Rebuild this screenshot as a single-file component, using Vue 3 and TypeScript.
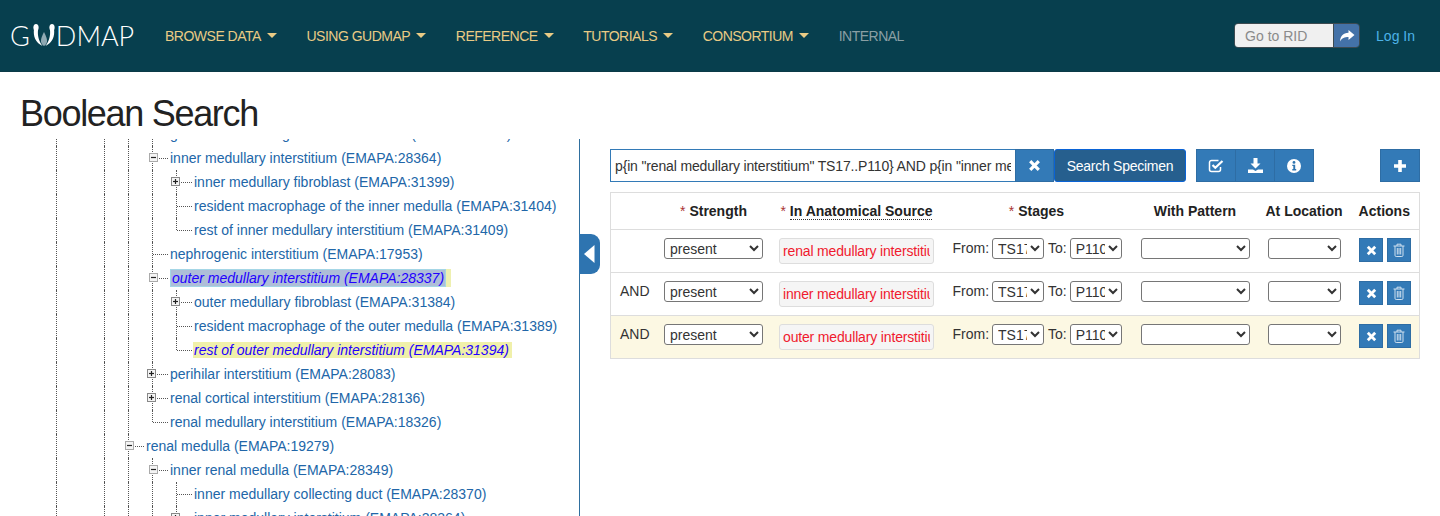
<script setup lang="ts">
interface TreeRow { text: string; col: number; exp?: 'minus' | 'plus'; last?: boolean; mark?: 'focus' | 'hit'; }
const rows: TreeRow[] = [
  { text: 'glomerular mesangial interstitial tissue (EMAPA:28339)', col: 4 },
  { text: 'inner medullary interstitium (EMAPA:28364)', col: 4, exp: 'minus' },
  { text: 'inner medullary fibroblast (EMAPA:31399)', col: 5, exp: 'plus' },
  { text: 'resident macrophage of the inner medulla (EMAPA:31404)', col: 5 },
  { text: 'rest of inner medullary interstitium (EMAPA:31409)', col: 5, last: true },
  { text: 'nephrogenic interstitium (EMAPA:17953)', col: 4 },
  { text: 'outer medullary interstitium (EMAPA:28337)', col: 4, exp: 'minus', mark: 'focus' },
  { text: 'outer medullary fibroblast (EMAPA:31384)', col: 5, exp: 'plus' },
  { text: 'resident macrophage of the outer medulla (EMAPA:31389)', col: 5 },
  { text: 'rest of outer medullary interstitium (EMAPA:31394)', col: 5, last: true, mark: 'hit' },
  { text: 'perihilar interstitium (EMAPA:28083)', col: 4, exp: 'plus' },
  { text: 'renal cortical interstitium (EMAPA:28136)', col: 4, exp: 'plus' },
  { text: 'renal medullary interstitium (EMAPA:18326)', col: 4, last: true },
  { text: 'renal medulla (EMAPA:19279)', col: 3, exp: 'minus' },
  { text: 'inner renal medulla (EMAPA:28349)', col: 4, exp: 'minus' },
  { text: 'inner medullary collecting duct (EMAPA:28370)', col: 5 },
  { text: 'inner medullary interstitium (EMAPA:28364)', col: 5, exp: 'plus' },
];
const guides = [true, false, true, true, true];
const nav = ['BROWSE DATA', 'USING GUDMAP', 'REFERENCE', 'TUTORIALS', 'CONSORTIUM'];
const terms = [
  { op: '', source: 'renal medullary interstitium', active: false },
  { op: 'AND', source: 'inner medullary interstitium', active: false },
  { op: 'AND', source: 'outer medullary interstitium', active: true },
];
const query = 'p{in "renal medullary interstitium" TS17..P110} AND p{in "inner medullary interstitium" TS17..P110} AND p{in "outer medullary interstitium" TS17..P110}';
</script>

<template>
  <div class="page">
    <header class="navbar">
      <div class="logo">
        <span>G</span>
        <svg class="logo-mark" width="28" height="24" viewBox="0 0 28 24">
          <path d="M14 9c-2 4-3.200 6.500-3 9.500.2 2 1.500 3.800 3 4.500 1.500-.7 2.800-2.500 3-4.500.2-3-1-5.500-3-9.500z" fill="#8fa9b3" />
          <path d="M4 6c-1 7.500 1.500 13.500 8.500 17C8.500 18 7.500 12 8 7z" fill="#fff" />
          <path d="M24 6c1 7.500-1.500 13.500-8.500 17 4-5 5-11 4.500-16z" fill="#fff" />
          <ellipse cx="6" cy="4.500" rx="2.600" ry="3.500" fill="#fff" />
          <ellipse cx="22" cy="4.500" rx="2.600" ry="3.500" fill="#fff" />
        </svg>
        <span>DMAP</span>
      </div>
      <nav class="menu">
        <a v-for="item in nav" :key="item" class="menu-item">{{ item }}<i class="caret"></i></a>
        <a class="menu-item muted">INTERNAL</a>
      </nav>
      <div class="nav-right">
        <div class="rid">
          <input class="rid-input" placeholder="Go to RID" />
          <button class="rid-go" aria-label="Go">
            <svg width="16" height="14" viewBox="0 0 16 14"><path d="M9.500 1l6 5-6 5V8C5.500 8 3 9 1 12.500 1.200 7.500 4 4 9.500 3.800z" fill="#fff" /></svg>
          </button>
        </div>
        <a class="login">Log In</a>
      </div>
    </header>

    <h1 class="title">Boolean Search</h1>

    <main class="body">
      <aside class="tree">
        <div class="tree-list">
          <div v-for="(r, i) in rows" :key="i" class="tree-row">
            <span v-for="n in r.col" :key="n" class="indent" :class="{ guide: guides[n - 1] }"></span>
            <span class="branch" :class="{ end: r.last }">
              <span v-if="r.exp" class="toggle" :class="{ 'toggle-plus': r.exp === 'plus' }">
                <svg width="7" height="7" viewBox="0 0 7 7">
                  <path d="M1 3.500h5" stroke="#222" stroke-width="1.200" />
                  <path v-if="r.exp === 'plus'" d="M3.500 1v5" stroke="#222" stroke-width="1.200" />
                </svg>
              </span>
            </span>
            <a class="node" :class="r.mark">
              <span v-if="r.mark === 'focus'" class="focus-inner">{{ r.text }}</span>
              <template v-else>{{ r.text }}</template>
            </a>
          </div>
        </div>
        <button class="collapse" aria-label="Collapse">
          <svg width="11" height="18" viewBox="0 0 11 18"><path d="M10.500 0v18L0 9z" fill="#fff" /></svg>
        </button>
      </aside>

      <section class="work">
        <div class="toolbar">
          <div class="search-group">
            <input class="query" :value="query" />
            <button class="btn clear" aria-label="Clear">
              <svg width="13" height="13" viewBox="0 0 13 13"><path d="M2.200 2.200l8.600 8.600M10.800 2.200l-8.600 8.600" stroke="#fff" stroke-width="3.200" /></svg>
            </button>
            <button class="btn run">Search Specimen</button>
          </div>
          <div class="tool-group">
            <button class="btn tool" aria-label="Validate">
              <svg width="16" height="14" viewBox="0 0 16 14" fill="none" stroke="#fff"><path d="M12.500 8v2.500a2 2 0 0 1-2 2h-7a2 2 0 0 1-2-2v-7a2 2 0 0 1 2-2h7" stroke-width="1.500" /><path d="M4.500 6l2.800 2.800L14.500 2" stroke-width="2.200" /></svg>
            </button>
            <button class="btn tool" aria-label="Download">
              <svg width="15" height="15" viewBox="0 0 15 15"><path d="M5.500 0h4v5.500h3L7.500 10.500 2.500 5.500h3zM0 11.500h5l2.500 1.500L10 11.500h5V15H0z" fill="#fff" /></svg>
            </button>
            <button class="btn tool" aria-label="Info">
              <svg width="14" height="14" viewBox="0 0 14 14"><circle cx="7" cy="7" r="7" fill="#fff" /><circle cx="7" cy="3.400" r="1.400" fill="#2f75b0" /><path d="M5.300 5.800h2.900v4.300h1v1.300H5.300v-1.300h1V7.100h-1z" fill="#2f75b0" /></svg>
            </button>
          </div>
          <button class="btn add" aria-label="Add">
            <svg width="14" height="14" viewBox="0 0 14 14"><path d="M7 1v12M1 7h12" stroke="#fff" stroke-width="3.600" /></svg>
          </button>
        </div>

        <table class="terms">
          <colgroup>
            <col class="c-op" /><col class="c-str" /><col class="c-src" /><col class="c-stg" /><col class="c-pat" /><col class="c-loc" /><col class="c-act" />
          </colgroup>
          <thead>
            <tr>
              <th></th>
              <th><span class="req">*</span> Strength</th>
              <th><span class="req">*</span> <span class="dotted">In Anatomical Source</span></th>
              <th><span class="req">*</span> Stages</th>
              <th>With Pattern</th>
              <th>At Location</th>
              <th>Actions</th>
            </tr>
          </thead>
          <tbody>
            <tr v-for="(t, i) in terms" :key="i" :class="{ active: t.active }">
              <td class="op">{{ t.op }}</td>
              <td><select class="sel s-str"><option>present</option></select></td>
              <td><input class="source" :value="t.source" readonly /></td>
              <td>
                <div class="stages">
                  <span>From:</span>
                  <select class="sel s-stage"><option>TS17</option></select>
                  <span class="to">To:</span>
                  <select class="sel s-stage"><option>P110</option></select>
                </div>
              </td>
              <td><select class="sel s-pat"><option></option></select></td>
              <td><select class="sel s-loc"><option></option></select></td>
              <td>
                <div class="acts">
                  <button class="btn act" aria-label="Clear term">
                    <svg width="11" height="11" viewBox="0 0 11 11"><path d="M1.800 1.800l7.400 7.400M9.200 1.800l-7.400 7.400" stroke="#fff" stroke-width="2.800" /></svg>
                  </button>
                  <button class="btn act" aria-label="Delete term">
                    <svg width="12" height="14" viewBox="0 0 12 14" fill="none" stroke="#cfe0ef" stroke-width="1"><path d="M.5 3h11M4 3V1.200h4V3M2 3v9.300a1.200 1.200 0 0 0 1.200 1.200h5.600a1.200 1.200 0 0 0 1.200-1.200V3M4.300 5v6.500M6 5v6.500M7.700 5v6.500" /></svg>
                  </button>
                </div>
              </td>
            </tr>
          </tbody>
        </table>
      </section>
    </main>
  </div>
</template>

<style>
html, body { margin: 0; background: #fff; }
</style>

<style scoped>
.page { width: 1440px; height: 516px; overflow: hidden; display: flex; flex-direction: column; font-family: "Liberation Sans", Arial, sans-serif; font-size: 14px; color: #333; background: #fff; }

.navbar { height: 72px; flex: none; box-sizing: border-box; display: flex; align-items: center; background: #073f4e; border-bottom: 1px solid #0b3a47; }
.logo { width: 165px; flex: none; box-sizing: border-box; padding-left: 10px; display: flex; align-items: center; font-family: "Lato", "Liberation Sans", sans-serif; font-weight: 300; font-size: 27px; color: #fff; line-height: 30px; }
.logo-mark { margin: -2px -2px 0 0; flex: none; }
.menu { display: flex; align-items: center; gap: 29.6px; }
.menu-item { color: #e9cb85; font-size: 14px; letter-spacing: -0.5px; display: flex; align-items: center; }
.menu-item.muted { color: #8a9fa4; }
.caret { display: inline-block; margin-left: 6px; width: 0; height: 0; border-left: 5px solid transparent; border-right: 5px solid transparent; border-top: 5px solid #e9cb85; }
.nav-right { margin-left: auto; padding-right: 25px; display: flex; align-items: center; gap: 16px; }
.rid { display: flex; height: 23px; border: 1px solid #3d4a50; border-radius: 4px; overflow: hidden; }
.rid-input { width: 98px; box-sizing: border-box; border: 0; padding: 0 10px; background: #f0f0f0; font: 14px "Liberation Sans", sans-serif; color: #333; outline: 0; }
.rid-input::placeholder { color: #8a8a8a; opacity: 1; }
.rid-go { width: 26px; border: 0; border-left: 1px solid #3d4a50; padding: 0; background: #4472a8; display: flex; align-items: center; justify-content: center; }
.login { color: #4db3e8; font-size: 14px; }

.title { flex: none; margin: 0; height: 67px; box-sizing: border-box; padding: 21px 0 0 20px; font-size: 36px; font-weight: 400; line-height: 42px; letter-spacing: -1.3px; color: #222; }

.body { flex: 1; min-height: 0; display: flex; }
.tree { width: 580px; flex: none; box-sizing: border-box; border-right: 1px solid #2f6f9f; position: relative; }
.tree-list { height: 100%; overflow: hidden; padding-left: 56px; box-sizing: border-box; }
.tree-row { height: 24px; display: flex; align-items: stretch; white-space: nowrap; }
.tree-row:first-child { margin-top: -17px; }
.indent { width: 24px; flex: none; box-sizing: border-box; }
.indent.guide { border-left: 1px dotted #555; }
.branch { width: 18px; flex: none; position: relative; box-sizing: border-box; border-left: 1px dotted #555; }
.branch.end { height: 12px; }
.branch::after { content: ""; position: absolute; left: 0; top: 12px; width: 15px; border-top: 1px dotted #555; }
.toggle { position: absolute; z-index: 1; left: -4px; top: 7px; width: 9px; height: 9px; border: 1px solid #aaa; background: #f4f4f4; display: flex; align-items: center; justify-content: center; box-sizing: border-box; }
.toggle-plus { left: -6px; border-color: #888; }
.node { color: #2166a8; font-size: 14px; align-self: center; height: 20px; line-height: 20px; }
.node.hit { background: #f0f0aa; color: #2200ff; font-style: italic; padding: 0 3px 0 1px; margin-left: -1px; height: 16px; line-height: 16px; }
.node.focus { background: #eef0b0; color: #2200ff; font-style: italic; padding: 0 5px 0 0; height: 18px; line-height: 16px; }
.focus-inner { display: block; background: #aebed8; padding: 0 1px 0 1px; border: 1px solid #a4d6e6; }
.collapse { position: absolute; right: -21px; top: 95px; width: 21px; height: 40px; border: 0; padding: 0; background: #2e74b0; border-radius: 0 9px 9px 0; display: flex; align-items: center; justify-content: center; }

.work { flex: 1; min-width: 0; box-sizing: border-box; padding: 10px 20px 0 30px; }
.toolbar { display: flex; align-items: stretch; height: 33px; }
.search-group { display: flex; }
.query { width: 405px; box-sizing: border-box; border: 1px solid #337ab7; border-right: 0; padding: 0 4px; font: 14px "Liberation Sans", sans-serif; letter-spacing: -0.15px; color: #333; outline: 0; }
.btn { border: 1px solid #2e6da4; background: #337ab7; color: #fff; padding: 0; display: flex; align-items: center; justify-content: center; font: 14px "Liberation Sans", sans-serif; }
.clear { width: 39px; }
.run { width: 132px; background: #265f8e; border: 1px solid #0a63d6; border-radius: 3px; letter-spacing: -0.27px; }
.tool-group { display: flex; margin-left: 10px; }
.tool { width: 40px; }
.tool + .tool { margin-left: -1px; }
.add { width: 40px; margin-left: auto; }

.terms { width: 809px; margin-top: 10px; table-layout: fixed; border-collapse: collapse; border: 1px solid #ddd; }
.c-op { width: 45px; } .c-str { width: 116px; } .c-src { width: 170px; } .c-stg { width: 190px; } .c-pat { width: 127px; } .c-loc { width: 91px; } .c-act { width: 70px; }
.terms th { height: 36px; padding: 0; font-size: 14px; font-weight: 700; text-align: center; color: #222; border-bottom: 1px solid #ddd; }
.req { color: #a33; font-weight: 400; }
.dotted { border-bottom: 1px dotted #333; }
.terms td { height: 43px; box-sizing: border-box; padding: 0; vertical-align: top; border-top: 1px solid #ddd; text-align: center; }
.terms tr.active td { background: #fcf8e3; }
.terms td.op { text-align: left; padding: 10px 0 0 9px; line-height: 17px; }
.sel { box-sizing: border-box; height: 21px; margin: 8px 0 0; font: 14px "Liberation Sans", sans-serif; color: #333; background: #fff; border: 1px solid #767676; border-radius: 3px; padding: 0 0 0 1px; vertical-align: top; }
.s-str { width: 99px; }
.s-stage { width: 52px; }
.s-pat { width: 109px; }
.s-loc { width: 73px; }
.source { display: block; margin: 8px auto 0; box-sizing: border-box; width: 155px; height: 26px; border: 1px solid #ddd; border-radius: 3px; background: #f5f5f5; color: #f01a2e; padding: 0 3px; font: 14px "Liberation Sans", sans-serif; letter-spacing: -0.16px; outline: 0; }
.stages { display: flex; align-items: flex-start; gap: 3px; padding-left: 11px; white-space: nowrap; }
.stages span { margin-top: 10px; line-height: 17px; }
.stages .to { margin-left: 1px; }
.acts { display: flex; justify-content: center; gap: 4px; margin-top: 8px; padding-left: 2px; }
.act { width: 24px; height: 24px; }
</style>
